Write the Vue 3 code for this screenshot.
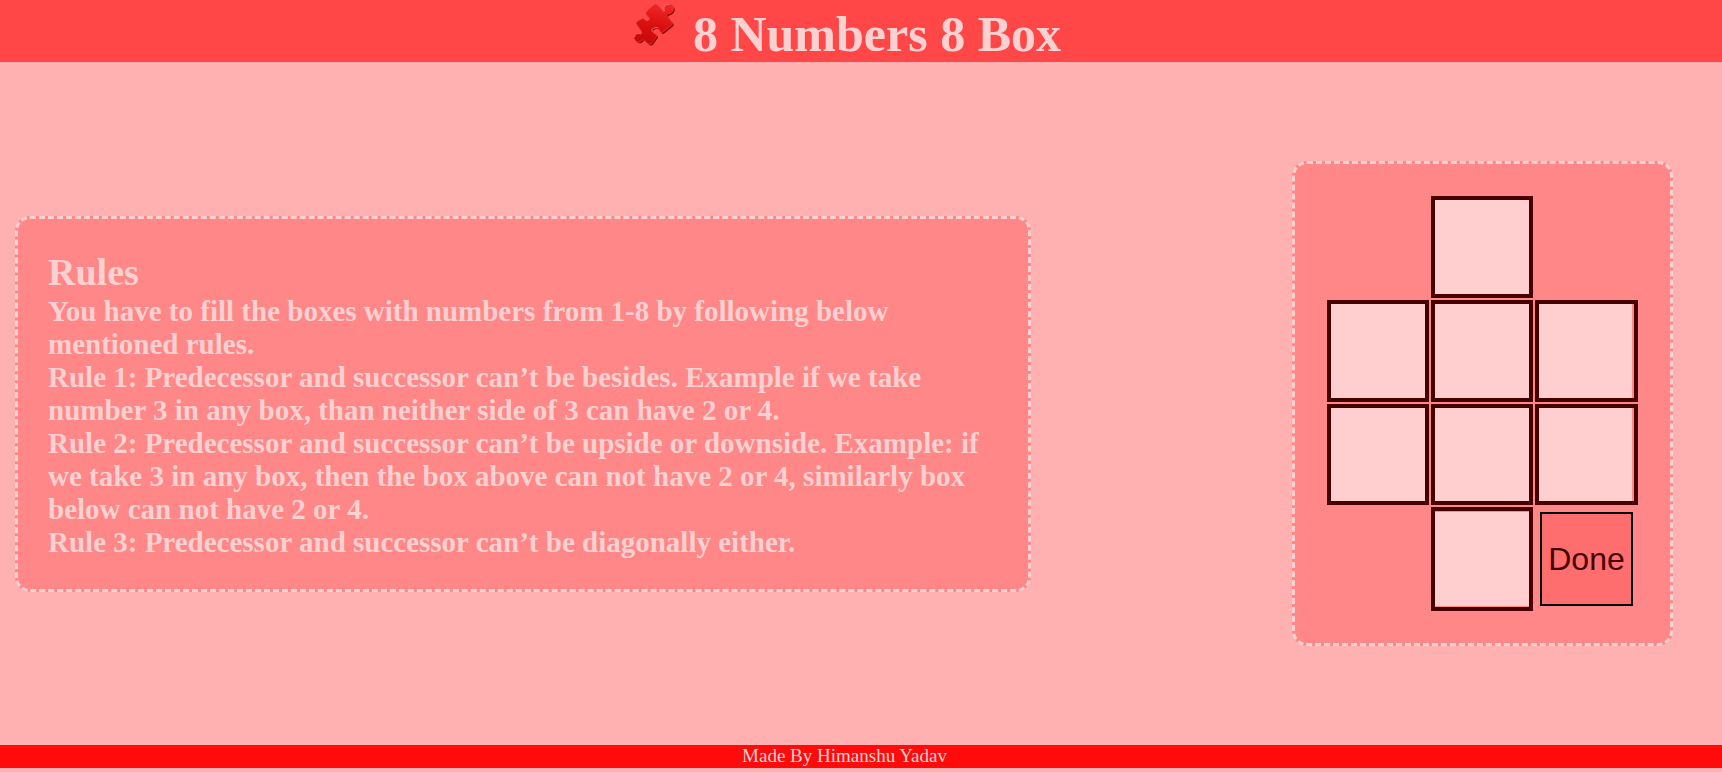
<script setup>
import { reactive } from 'vue'

const cells = reactive([
  { area: 'a', value: '' },
  { area: 'b', value: '' },
  { area: 'c', value: '' },
  { area: 'd', value: '' },
  { area: 'e', value: '' },
  { area: 'f', value: '' },
  { area: 'g', value: '' },
  { area: 'h', value: '' },
])

const rules = [
  'You have to fill the boxes with numbers from 1-8 by following below mentioned rules.',
  'Rule 1: Predecessor and successor can’t be besides. Example if we take number 3 in any box, than neither side of 3 can have 2 or 4.',
  'Rule 2: Predecessor and successor can’t be upside or downside. Example: if we take 3 in any box, then the box above can not have 2 or 4, similarly box below can not have 2 or 4.',
  'Rule 3: Predecessor and successor can’t be diagonally either.',
]
</script>

<template>
  <div class="page">
    <header class="header">
      <svg class="logo" viewBox="39 9 126 132" aria-hidden="true">
        <defs>
          <linearGradient id="piece" x1="0.6" y1="0" x2="0.4" y2="1">
            <stop offset="0" stop-color="#f02626" />
            <stop offset="0.5" stop-color="#dc1010" />
            <stop offset="1" stop-color="#c60808" />
          </linearGradient>
          <path
            id="outline"
            d="M102 14 Q107 10 112 15 L125 31 Q130 38 134 33 C127 20 136 11 149 12 C164 15 164 35 150 40 C142 42 138 46 143 51 L156 67 Q159 72 154 76 L128 97 Q122 101 119 93 C117 82 101 80 96 88 C93 94 98 98 106 102 Q113 107 108 112 L95 130 Q90 135 84 131 L71 120 C67 117 66 122 61 125 C50 129 40 119 43 109 C46 99 55 99 61 101 C66 102 67 98 64 93 L49 72 Q47 67 52 64 L66 56 Q72 54 74 59 C78 65 88 63 88 56 C88 50 82 49 79 44 Q75 38 81 33 Z"
          />
        </defs>
        <use href="#outline" class="piece-side" x="4" y="4" />
        <use href="#outline" class="piece-face" />
        <path class="shine" d="M134 33 C127 20 136 12 149 13 M44 111 C46 99 55 99 62 102 M97 95 C93 88 105 80 114 84" />
      </svg>
      <h1 class="title">8 Numbers 8 Box</h1>
    </header>

    <main class="main">
      <section class="panel rules">
        <h2 class="rules-title">Rules</h2>
        <p v-for="rule in rules" :key="rule" class="rule">{{ rule }}</p>
      </section>

      <form class="panel board" @submit.prevent>
        <div v-for="(cell, i) in cells" :key="cell.area" class="cell" :class="'cell-' + cell.area">
          <input v-model="cell.value" class="field" type="text" maxlength="1" :aria-label="'Box ' + (i + 1)" />
        </div>
        <button class="done" type="submit">Done</button>
      </form>
    </main>

    <footer class="footer">Made By Himanshu Yadav</footer>
  </div>
</template>

<style>
body {
  background: #ffb0b0;
}
</style>

<style scoped>
.page {
  box-sizing: border-box;
  display: flex;
  flex-direction: column;
  min-height: 100vh;
  padding-bottom: 4px;
  font-family: "Liberation Serif", "Times New Roman", serif;
  color: #fbd0d0;
}

.header {
  display: flex;
  justify-content: center;
  gap: 18px;
  height: 62px;
  padding-right: 28px;
  background: #ff4747;
}

.logo {
  width: 42px;
  height: 44px;
  margin-top: 3px;
}

.piece-side {
  fill: #980505;
}

.piece-face {
  fill: url(#piece);
  stroke: #e0453f;
  stroke-width: 2;
}

.shine {
  fill: none;
  stroke: #f08a84;
  stroke-width: 2;
}

.title {
  margin: 0;
  padding-top: 5px;
  font-size: 50px;
  line-height: 58px;
}

.main {
  flex: 1;
  display: flex;
  align-items: center;
  justify-content: space-between;
  gap: 32px;
  padding: 0 49px 0 15px;
}

.panel {
  box-sizing: border-box;
  border: 3px dashed #fbd0d0;
  border-radius: 15px;
  background: #ff8787;
}

.rules {
  width: 59vw;
  padding: 30px;
}

.rules-title {
  margin: 0;
  font-size: 38px;
  line-height: 46px;
}

.rule {
  margin: 0;
  font-size: 29px;
  font-weight: bold;
  line-height: 33px;
}

.board {
  display: grid;
  flex: none;
  grid-template-columns: 102px 102px 103px;
  grid-template-rows: 102px 102px 101px 104px;
  grid-template-areas:
    ". a ."
    "b c d"
    "e f g"
    ". h done";
  gap: 2px;
  padding: 32px;
}

.cell {
  display: flex;
  align-items: center;
  border: 4px solid #450000;
}

.cell-a { grid-area: a; }
.cell-b { grid-area: b; }
.cell-c { grid-area: c; }
.cell-d { grid-area: d; padding-right: 2px; }
.cell-e { grid-area: e; }
.cell-f { grid-area: f; }
.cell-g { grid-area: g; padding-right: 2px; }
.cell-h { grid-area: h; padding: 1px 0; }

.field {
  box-sizing: border-box;
  width: 100%;
  height: 100%;
  min-width: 0;
  padding: 0;
  border: 0;
  background: #ffcece;
  color: #450000;
  font: 32px "Liberation Sans", Arial, sans-serif;
  text-align: center;
}

.done {
  grid-area: done;
  place-self: center;
  box-sizing: border-box;
  width: 93px;
  height: 94px;
  padding: 0;
  border: 2px solid #000;
  background: #ff6e6e;
  color: #450000;
  font: 32px "Liberation Sans", Arial, sans-serif;
}

.footer {
  padding: 0 33px 2px 0;
  background: #ff0b0b;
  font-size: 19px;
  line-height: 21px;
  text-align: center;
}
</style>
